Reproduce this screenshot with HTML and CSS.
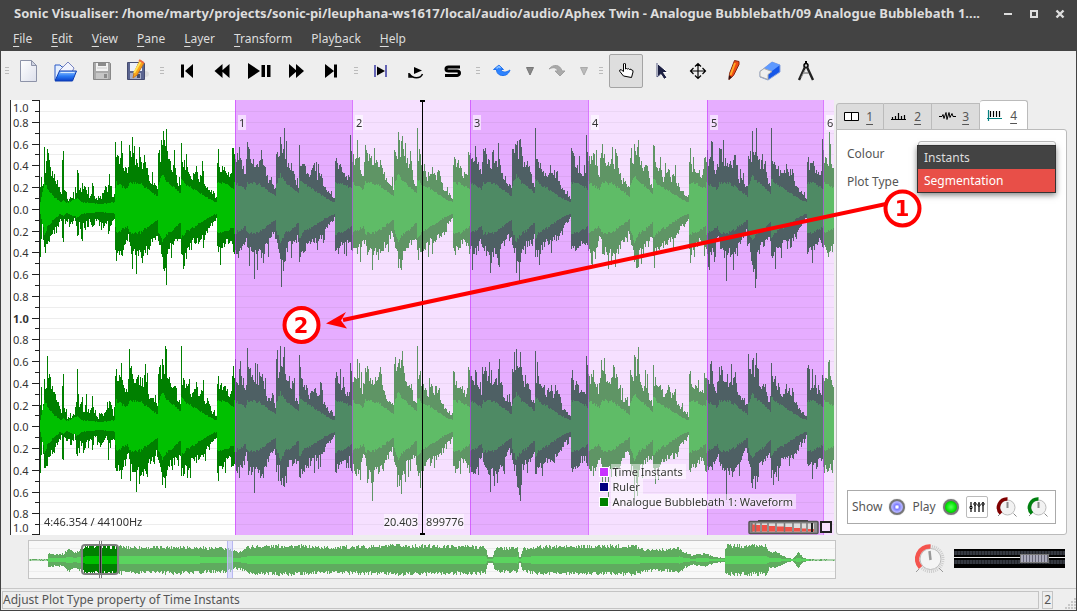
FILE: index.html
```html
<!DOCTYPE html>
<html lang="en">
<head>
<meta charset="utf-8">
<title>Sonic Visualiser</title>
<link rel="stylesheet" href="styles.css">
</head>
<body>
<div class="window">
  <header class="titlebar">
    <h1 class="title">Sonic Visualiser: /home/marty/projects/sonic-pi/leuphana-ws1617/local/audio/audio/Aphex Twin - Analogue Bubblebath/09 Analogue Bubblebath 1....</h1>
    <div class="window-buttons">
      <button class="winbtn" aria-label="Minimise"><svg width="12" height="12"><path d="M2 6h8" stroke="#ddd" stroke-width="2"/></svg></button>
      <button class="winbtn" aria-label="Maximise"><svg width="12" height="12"><path d="M3 3h6v6h-6z" fill="none" stroke="#ddd" stroke-width="2"/></svg></button>
      <button class="winbtn" aria-label="Close"><svg width="12" height="12"><path d="M2.500 2.500l7 7M9.500 2.500l-7 7" stroke="#ddd" stroke-width="2.400"/></svg></button>
    </div>
  </header>
  <nav class="menubar">
    <button><u>F</u>ile</button><button><u>E</u>dit</button><button><u>V</u>iew</button><button><u>P</u>ane</button><button><u>L</u>ayer</button><button><u>T</u>ransform</button><button>Play<u>b</u>ack</button><button><u>H</u>elp</button>
  </nav>

  <div class="toolbar">
    <span class="grip grip-first"></span>
    <div class="group">
      <button class="tool" aria-label="New"><svg width="24" height="24"><defs><linearGradient id="paper" x2="1" y2="1"><stop offset="0" stop-color="#fff"/><stop offset="1" stop-color="#dde0ec"/></linearGradient></defs><path d="M3.500 1.500h11l5 5v16h-16z" fill="url(#paper)" stroke="#8d93a8"/><path d="M14.500 1.500v5h5z" fill="#cfd3e2" stroke="#8d93a8"/></svg></button>
      <button class="tool" aria-label="Open"><svg width="24" height="24"><defs><linearGradient id="folder" x2="0" y2="1"><stop offset="0" stop-color="#9cc6ff"/><stop offset=".5" stop-color="#2c7cf5"/><stop offset="1" stop-color="#0a3fc8"/></linearGradient></defs><path d="M2 6h5l2 2h9v13H2z" fill="#e4efff" stroke="#2a5bc8"/><path d="M6 12L15 3l6 6-3 6z" fill="#f2f4fd" stroke="#7783c0"/><path d="M6.500 12h17l-4 10H2z" fill="url(#folder)" stroke="#0d3db0"/><path d="M7.500 13.500h14" stroke="#d7ebff"/></svg></button>
      <button class="tool" aria-label="Save"><svg width="24" height="24"><path d="M4.500 3.500h16l1 1v16h-17z" fill="#a9a9a9" stroke="#888"/><path d="M7 4h12v8H7z" fill="#f2f2f2"/><path d="M7 14h12v6H7z" fill="#c6c6c6"/><path d="M15 15h3v4h-3zM9 4h8v3H9z" fill="#8b8b8b"/><path d="M8 9h10" stroke="#ccc"/></svg></button>
      <button class="tool" aria-label="Save As"><svg width="24" height="24"><ellipse cx="20" cy="15" rx="4" ry="3" fill="#ddd"/><path d="M2.500 3.500h16l1 1v16h-17z" fill="#5b6590" stroke="#454c70"/><path d="M5 4h12v8H5z" fill="#eef1fa"/><path d="M5 14h11v6H5z" fill="#a7aec8"/><path d="M12 15h3v4h-3z" fill="#444b6b"/><path d="M15 1l4 3-7 12-4 3 1-5z" fill="#fba51a" stroke="#c6761a"/><path d="M16 2L9 14" stroke="#ffe45c" stroke-width="2"/><path d="M14 1l5 3" stroke="#ee6842" stroke-width="2"/></svg></button>
    </div>
    <span class="grip"></span>
    <div class="group">
      <button class="tool" aria-label="Rewind to Start"><svg width="24" height="24"><path d="M6 5.500h3v13H6zM18 5v14l-8-7z"/></svg></button>
      <button class="tool" aria-label="Rewind"><svg width="24" height="24"><path d="M11.500 5v14L3.500 12zM18.500 5v14l-8-7z"/></svg></button>
      <button class="tool" aria-label="Play / Pause"><svg width="24" height="24"><path d="M1 4v16l12-8zM14.500 6h3.500v12h-3.500zM20 6h3.500v12H20z"/></svg></button>
      <button class="tool" aria-label="Fast Forward"><svg width="24" height="24"><path d="M6 5v14l8-7zM13 5v14l8-7z"/></svg></button>
      <button class="tool" aria-label="Fast Forward to End"><svg width="24" height="24"><path d="M6 5v14l9-7zM15 5.500h3v13h-3z"/></svg></button>
    </div>
    <span class="grip"></span>
    <div class="group">
      <button class="tool" aria-label="Constrain Playback to Selection"><svg width="24" height="24"><path d="M6 6v12M17 6v12" stroke="#6565b5" stroke-width="2"/><path d="M8 7.500v9l8-4.500z"/></svg></button>
      <button class="tool" aria-label="Loop Playback"><svg width="24" height="24"><path d="M9 8v7l8-3.500z"/><path d="M4 14v4h4M4.500 15c3 5 11 5 13 0" fill="none" stroke="#000" stroke-width="1.500"/></svg></button>
      <button class="tool" aria-label="Solo Current Pane"><svg width="24" height="24"><path d="M19 8H7.500Q5 8 5 10t2.500 2h8.500q2.500 0 2.500 2t-2.500 2.500H4" fill="none" stroke="#000" stroke-width="3"/></svg></button>
    </div>
    <span class="grip"></span>
    <div class="group">
      <button class="tool" aria-label="Undo"><svg width="24" height="24"><path d="M2.500 10.500L8 6l4.500 4.500H10c1 3 4.500 3.500 9 .500-1.500 5-6 6.500-10 5-2.500-1-3.500-3-3.500-5.500z" fill="#2d83ff" stroke="#2372ec"/><path d="M5.500 9.500L8 7.500l1.500 1.500" fill="none" stroke="#8fc2ff" stroke-width="1.500"/></svg></button>
      <button class="tool narrow" aria-label="Undo history"><svg width="10" height="10"><path d="M1.500 1.500h7L5 9z" fill="#888" stroke="#777"/></svg></button>
      <button class="tool" aria-label="Redo"><svg width="24" height="24"><path d="M4 10c4-5 11-5 13 2h3l-5 5-5-5h3c-2-4-5-4-9-2z" fill="#aaa" stroke="#a0a0a0"/></svg></button>
      <button class="tool narrow" aria-label="Redo history"><svg width="10" height="10"><path d="M1.500 1.500h7L5 9z" fill="#bbb" stroke="#aaa"/></svg></button>
    </div>
    <span class="grip grip-wide"></span>
    <div class="group">
      <button class="tool pressed" aria-label="Navigate"><svg width="24" height="24"><path d="M9.500 17L5.500 12q0-2 2-1l2 1.500V5q1-2 2 0v5q1-1 2 0 1-1 2 .500 2-1 2 .500 2 0 1.500 2l-1.500 5.500z" fill="#fff" stroke="#000"/></svg></button>
      <button class="tool" aria-label="Select"><svg width="24" height="24"><path d="M7.500 4.500v14l3.500-3 3 5 3-2-3.500-5h4.500z" fill="#1d2143" stroke="#fff"/><path d="M7 4v14l3.500-3" fill="none" stroke="#555b80"/></svg></button>
      <button class="tool" aria-label="Edit"><svg width="24" height="24"><path d="M12 4.500v15M4.500 12h15M9 7.500l3-3 3 3M9 16.500l3 3 3-3M7.500 9l-3 3 3 3M16.500 9l3 3-3 3" fill="none" stroke="#000" stroke-width="1.200"/></svg></button>
      <button class="tool" aria-label="Draw"><svg width="24" height="24"><path d="M12.500 1.500l4.500 1v3l-5.500 11-4.500 4 .500-6z" fill="#f04c12" stroke="#822714"/><path d="M13 4L8.500 16" stroke="#ffad28" stroke-width="2"/><path d="M7 16.500l3 1.500-3.500 3z" fill="#311"/></svg></button>
      <button class="tool" aria-label="Erase"><svg width="24" height="24"><path d="M2 12.500L14 3l8 3v7L10 21l-8-3z" fill="#1657e8" stroke="#8ba4dc"/><path d="M2 12.500L14 3l8 3-12 9z" fill="#5f9aff"/><path d="M2 12.500l4-3 8 3-4 3v5l-8-3z" fill="#eee" stroke="#aaa"/></svg></button>
      <button class="tool" aria-label="Measure"><svg width="24" height="24"><path d="M12 2v3" stroke="#000" stroke-width="2"/><circle cx="12" cy="6.500" r="2" fill="#ccc" stroke="#000" stroke-width="1.500"/><path d="M11 8L5 21M13 8l6 13" stroke="#222" stroke-width="2.400"/><path d="M9.500 14h5" stroke="#555"/><path d="M11 11L7 19" stroke="#999"/></svg></button>
    </div>
  </div>

  <main class="main">
    <section class="pane" aria-label="Waveform pane">
      <div class="scale" id="scale"></div>
      <div class="stage">
        <canvas class="fill" id="wave"></canvas>
        <div id="segments"></div>
        <div class="playhead"></div>
        <span class="readout duration">4:46.354 / 44100Hz</span>
        <span class="readout seconds">20.403</span>
        <span class="readout frames">899776</span>
        <ul class="legend">
          <li><i class="swatch instants"></i><span>Time Instants</span></li>
          <li><i class="swatch ruler"></i><span>Ruler</span></li>
          <li><i class="swatch waveform"></i><span>Analogue Bubblebath 1: Waveform</span></li>
        </ul>
        <svg class="zoomwheel" width="84" height="15">
          <rect x="1" y="1.500" width="69" height="12" rx="1" fill="#8e8e8e" stroke="#555" stroke-width="1.500"/>
          <path d="M10 .500h50" stroke="#444"/>
          <path d="M5 3.500h61v8H5z" fill="#ddd"/>
          <path d="M4 4.500h3v7H4zM8 5h4v6.500H8zM14 5h5v6.500h-5zM21 6h6v5.500h-6zM29 6.500h7v5h-7zM37 7h7v4.500h-7zM46 8h6v3.500h-6zM54 8.500h4v3h-4zM60 9h6v2.500h-6z" fill="#ef5148"/>
          <path d="M3.500 3v9M7.500 3v9M13 3v9M20 3v9M28 3v9M36.500 3v9M45 3v9M53 3v9M59 3v9" stroke="#777" stroke-width="1.500"/><path d="M64 3v9" stroke="#222" stroke-width="2"/>
          <rect x="73" y="2" width="10" height="10" fill="#f6e0ff" stroke="#222" stroke-width="2"/>
        </svg>
      </div>
    </section>

    <section class="side">
      <div class="tabs" role="tablist">
        <button class="tab" role="tab"><svg width="16" height="12"><path d="M.500 1.500h14v8H.500zM7.500 1.500v8" fill="#fff" stroke="#000"/></svg><u>1</u></button>
        <button class="tab" role="tab"><svg width="16" height="12"><path d="M0 8.500h15M1.500 8V6M4.500 8V5M7.500 8V2M10.500 8V5M13.500 8V4" stroke="#000" stroke-width="1.200"/></svg><u>2</u></button>
        <button class="tab" role="tab"><svg width="17" height="12"><path d="M0 5.500h3l1-2 1 4 2-6 1 7 2-7 1 5 2-4 1 3h3" fill="none" stroke="#000"/></svg><u>3</u></button>
        <button class="tab active" role="tab" aria-selected="true"><svg width="16" height="12"><path d="M1.500 0v11M0 8.500h15" stroke="#058080" stroke-width="1.200"/><path d="M3.500 1v6M6.500 1v6M9.500 1v6M12.500 1v6" stroke="#000" stroke-width="1.200"/></svg><u>4</u></button>
      </div>
      <div class="panel">
        <div class="props">
          <label for="colour">Colour</label>
          <select id="colour" class="combo"><option></option></select>
          <label for="plot">Plot Type</label>
          <select id="plot" class="combo"><option></option></select>
          <div class="popup" role="listbox" aria-label="Plot Type">
            <button role="option">Instants</button>
            <button role="option" class="chosen" aria-selected="true">Segmentation</button>
          </div>
        </div>
        <div class="playbox">
          <label for="show">Show</label><input class="led blue" type="checkbox" id="show" checked>
          <label for="play">Play</label><input class="led green" type="checkbox" id="play" checked>
          <button class="mixer" aria-label="Playback parameters"><svg width="16" height="12"><path d="M2 1v10M6 1v10M10 1v10M14 1v10" stroke="#000" stroke-width="1.200"/><path d="M1 5.500h2v2H1zM5 2h2v2H5zM9 3h2v2H9zM13 2h2v2h-2z" fill="#fff" stroke="#000"/></svg></button>
          <span class="dial"><svg width="24" height="24"><circle cx="12.500" cy="12.500" r="7.500" fill="#f2f2f2" stroke="#bbb"/><path d="M6 18.500A8.500 8.500 0 0 1 12.500 4" fill="none" stroke="#800000" stroke-width="3.500"/><path d="M12.500 7v6" stroke="#888" stroke-width="2"/><path d="M5 19l-2 2M18.500 18.500l3 3" stroke="#888"/></svg><input type="range" aria-label="Gain"></span>
          <span class="dial"><svg width="24" height="24"><circle cx="12.500" cy="12.500" r="7.500" fill="#f2f2f2" stroke="#bbb"/><path d="M6 18.500A8.500 8.500 0 0 1 12.500 4" fill="none" stroke="#008010" stroke-width="3.500"/><path d="M12.500 7v6" stroke="#888" stroke-width="2"/><path d="M5 19l-2 2M18.500 18.500l3 3" stroke="#888"/></svg><input type="range" aria-label="Pan"></span>
        </div>
      </div>
    </section>

    <section class="overview" aria-label="Overview">
      <canvas class="fill" id="overview"></canvas>
      <div class="viewport"></div>
    </section>
    <div class="transport">
      <span class="dial big"><svg width="32" height="32"><circle cx="16.500" cy="16" r="12.500" fill="none" stroke="#ccc" stroke-width="3" stroke-dasharray="1 1"/><circle cx="16.500" cy="16" r="10.500" fill="#f4f4f4" stroke="#bbb"/><path d="M6.500 24.500A12.500 12.500 0 0 1 16.500 3.500" fill="none" stroke="#f4544e" stroke-width="4.500"/><path d="M15.500 8l1 9" stroke="#999" stroke-width="2.500"/><path d="M5 26l-3 3M25 25l4 4" stroke="#999"/></svg><input type="range" aria-label="Playback speed"></span>
      <input class="fader" type="range" min="0" max="100" value="80" aria-label="Master volume">
    </div>
  </main>

  <footer class="status">
    <span class="message">Adjust Plot Type property of Time Instants</span>
    <span class="cell">2</span>
    <svg class="sizegrip" width="12" height="12"><path d="M10 1h2M7 4h2M10 4h2M4 7h2M7 7h2M10 7h2M1 10h2M4 10h2M7 10h2M10 10h2" stroke="#bbb" stroke-width="1.500"/></svg>
  </footer>

  <svg class="callouts" width="1077" height="611">
    <path d="M886 204L343 320" stroke="#f00" stroke-width="4"/>
    <path d="M326 323.500l20-11.500-5 8.500 6 8z" fill="#f00"/>
    <g fill="#fff" stroke="#f00" stroke-width="4"><circle cx="902.500" cy="208.500" r="17"/><circle cx="301.500" cy="325" r="17"/></g>
    <g class="callout-text"><text x="902" y="216">1</text><text x="301" y="333">2</text></g>
  </svg>
</div>
<script src="app.js"></script>
</body>
</html>
```
FILE: styles.css
```css
* { box-sizing: border-box; }
body {
  margin: 0;
  background: #434343;
  font: 12px/18px "Noto Sans", sans-serif;
  color: #555;
}
button {
  font: inherit;
  color: inherit;
  background: none;
  border: 0;
  padding: 0;
  margin: 0;
}
svg { display: block; }
u { text-underline-offset: 3px; }

.window {
  position: relative;
  display: flex;
  flex-direction: column;
  min-height: 100vh;
  border: 1px solid #434343;
  border-top: 0;
  background: #eee;
  overflow: hidden;
}
.titlebar {
  display: flex;
  align-items: center;
  height: 27px;
  padding: 0 10px 0 13px;
  background: #434343;
  color: #ddd;
}
.title {
  flex: 1;
  min-width: 0;
  margin: 0;
  font-size: 13px;
  line-height: 16px;
  padding-bottom: 2px;
  font-weight: bold;
  white-space: nowrap;
  overflow: hidden;
}
.window-buttons { display: flex; gap: 14px; }
.menubar {
  display: flex;
  gap: 1px;
  height: 24px;
  padding-left: 3px;
  background: #434343;
  color: #ddd;
}
.menubar button { padding: 0 9px; }

.toolbar {
  display: flex;
  height: 44px;
  padding-top: 3px;
}
.group { display: flex; gap: 2px; }
.tool {
  display: flex;
  align-items: center;
  justify-content: center;
  width: 34px;
  height: 34px;
  border: 1px solid transparent;
  border-radius: 2px;
}
.tool.narrow { width: 16px; }
.tool.pressed { background: #dedede; border-color: #a4a4a4; }
.grip { width: 16px; height: 34px; display: flex; align-items: center; justify-content: center; }
.grip-first { width: 11px; }
.grip-wide { width: 17px; }
.grip::before {
  content: "";
  width: 4px;
  height: 8px;
  background: repeating-linear-gradient(#bbb 0 1px, transparent 1px 3px);
}

.main {
  flex: 1;
  display: grid;
  grid-template-columns: 1fr 231px;
  grid-template-rows: 1fr 40px;
  row-gap: 5px;
  padding: 5px 9px 8px;
}
.pane {
  display: flex;
  margin-right: 2px;
  border-left: 1px solid #333;
  background: #fff;
  font-size: 11px;
  line-height: 15px;
  color: #333;
}
.scale {
  position: relative;
  width: 29px;
  border-right: 1px solid #222;
  overflow: hidden;
}
.scale span { position: absolute; left: 2px; transform: translateY(-50%); }
.scale .joint { font-weight: bold; }
.scale i { position: absolute; right: 0; width: 4px; height: 1px; background: #222; }
.scale .major { width: 7px; }
.stage { position: relative; flex: 1; min-width: 0; overflow: hidden; }
.fill { position: absolute; inset: 0; width: 100%; height: 100%; }
.segment-label {
  position: absolute;
  top: 15px;
  padding: 0 1px;
  background: rgba(255, 255, 255, .6);
}
.playhead {
  position: absolute;
  left: calc(48% + 1px);
  top: 0;
  bottom: 0;
  width: 1px;
  background: #000;
}
.playhead::before, .playhead::after {
  content: "";
  position: absolute;
  left: -2px;
  width: 5px;
  height: 2px;
  background: #000;
}
.playhead::before { top: 0; }
.playhead::after { bottom: 0; }
.readout { position: absolute; bottom: 6px; text-shadow: 0 0 1px #fff, 0 0 2px #fff; }
.duration { left: 4px; }
.seconds { right: calc(52% + 3px); background: rgba(255, 255, 255, .5); }
.frames { left: calc(48% + 5px); background: rgba(255, 255, 255, .5); }
.legend {
  position: absolute;
  right: 38px;
  bottom: 26px;
  margin: 0;
  padding: 0;
  list-style: none;
}
.legend li { display: flex; align-items: center; gap: 2px; }
.legend span {
  padding: 0 3px 0 1px;
  background: rgba(255, 255, 255, .5);
  text-shadow: 0 0 1px #fff, 0 0 2px #fff;
}
.swatch { width: 10px; height: 10px; border: 1px solid #fff; }
.instants { background: #c832ff; }
.ruler { background: #000080; }
.waveform { background: #008000; }
.zoomwheel { position: absolute; right: 2px; bottom: 0; }

.side { display: flex; flex-direction: column; min-width: 0; }
.tabs { display: flex; align-items: flex-end; height: 30px; margin-bottom: -1px; }
.tab {
  display: flex;
  align-items: center;
  gap: 6px;
  width: 48px;
  height: 27px;
  padding: 0 10px 0 7px;
  border: 1px solid #bbb;
  border-left-width: 0;
  background: #dcdcdc;
}
.tab:first-child { border-left-width: 1px; border-radius: 3px 0 0 0; }
.tab u { margin-left: auto; }
.tab.active {
  height: 30px;
  border-bottom: 0;
  background: #fff;
  border-radius: 3px 3px 0 0;
}
.panel {
  flex: 1;
  display: flex;
  flex-direction: column;
  justify-content: space-between;
  padding: 11px 10px 10px;
  border: 1px solid #bbb;
  border-radius: 0 3px 3px 3px;
  background: #fff;
}
.props {
  position: relative;
  display: grid;
  grid-template-columns: 71px 1fr;
  row-gap: 4px;
  align-items: center;
}
.props label { padding-top: 2px; }
.combo {
  height: 24px;
  min-width: 0;
  border: 1px solid #bbb;
  border-radius: 3px;
  background: #fff;
  appearance: none;
}
.popup {
  position: absolute;
  left: 70px;
  right: 0;
  top: 4px;
  display: flex;
  flex-direction: column;
  border: 1px solid #333;
  background: #434343;
  color: #ddd;
  box-shadow: 0 2px 6px rgba(0, 0, 0, .5);
}
.popup button { height: 23px; padding: 1px 6px 0; text-align: left; }
.popup .chosen { background: #e84f48; color: #fff; }
.playbox {
  display: flex;
  align-items: center;
  gap: 7px;
  height: 34px;
  padding: 0 4px;
  border: 1px solid #aaa;
}
.led {
  appearance: none;
  width: 16px;
  height: 16px;
  margin: 0;
  border: 2px solid #777;
  border-radius: 50%;
  box-shadow: 0 0 1px #888;
}
.blue { background: radial-gradient(#fff 10%, #7d7dff 30%, #b5b5ff 60%, #6d6dd8); }
.green { background: radial-gradient(#4cff4c 10%, #00e000 60%, #009000); }
.mixer {
  display: flex;
  align-items: center;
  justify-content: center;
  width: 22px;
  height: 22px;
  border: 1px solid #bbb;
  border-radius: 2px;
}
.dial { position: relative; }
.dial input { position: absolute; inset: 0; width: 100%; height: 100%; margin: 0; opacity: 0; }

.overview {
  position: relative;
  margin: 0 0 1px 18px;
  border: 1px solid #c4c4c4;
  background: #f8f8f8;
}
.viewport {
  position: absolute;
  left: 52px;
  top: 3px;
  bottom: 3px;
  width: 38px;
  border: 2px solid #808080;
  border-radius: 4px;
}
.transport { display: flex; align-items: center; justify-content: flex-end; gap: 8px; padding: 0 2px 3px 0; }
.fader {
  appearance: none;
  width: 111px;
  height: 19px;
  margin: 0;
  background:
    linear-gradient(transparent 8px, #eee 8px 9px, transparent 9px),
    repeating-linear-gradient(90deg, rgba(0, 0, 0, .35) 0 1px, transparent 1px 3px),
    linear-gradient(#000 0 2px, #353941 2px 6px, #000 6px 11px, #353941 11px 15px, #000 15px);
}
.fader::-webkit-slider-thumb {
  appearance: none;
  width: 29px;
  height: 9px;
  border: 1px solid #777;
  background: repeating-linear-gradient(90deg, #aab 0 2px, #667 2px 3px);
}

.status {
  display: flex;
  align-items: center;
  gap: 3px;
  height: 22px;
  padding: 0 0 0 1px;
  border-top: 1px solid #c8c8c8;
}
.message, .cell { border: 1px solid #c4c4c4; padding: 0 1px; line-height: 16px; }
.message { flex: 1; padding-left: 0; }
.sizegrip { margin-left: 8px; align-self: flex-end; }

.callouts { position: absolute; left: -1px; top: 0; pointer-events: none; }
.callout-text {
  font: bold 21px "DejaVu Sans", sans-serif;
  text-anchor: middle;
  fill: #f00;
}
```
FILE: app.js
```javascript
// Envelope breakpoints: [x, amplitude, x, amplitude, ...] in pixels.
const BAR = 118;
const bar = {
  up: [0,54,4,50,5,67,6,54,9,42,11,37,13,65,18,52,22,48,27,48,28,60,30,46,33,31,38,27,41,22,42,62,45,54,46,77,48,60,50,80,51,58,55,42,59,46,61,30,64,24,65,74,66,50,71,45,75,33,80,44,83,32,87,42,88,29,92,20,97,14,100,11,101,52,102,60,103,45,107,44,113,34,115,38,116,62,118,58],
  down: [0,46,5,50,8,42,12,31,14,46,19,50,20,75,21,49,28,50,31,44,35,36,40,25,42,38,45,48,46,60,48,62,49,70,51,50,55,40,60,37,64,32,65,52,70,46,76,38,83,34,88,32,92,22,97,16,100,11,101,48,106,44,111,37,115,36,117,46,118,54],
  inner: [0,26,11,19,13,26,24,25,32,19,41,12,42,24,46,34,48,30,51,26,57,22,64,15,65,30,70,24,80,18,90,11,97,7,100,6,101,26,108,25,118,19]
};
const intro = {
  up: [0,26,1,32,2,18,3,25,4,52,5,34,7,60,9,50,11,38,14,35,18,25,21,16,22,49,23,52,24,20,27,10,34,12,36,22,37,46,38,30,40,20,46,20,50,13,52,30,53,18,57,9,62,13,68,24,72,17,76,10],
  down: [0,38,1,35,2,15,4,44,5,46,7,40,10,32,14,24,18,16,21,11,22,35,23,36,24,12,30,17,34,10,37,33,38,22,45,22,50,12,53,25,54,14,61,18,67,14,68,27,72,12,76,10],
  inner: [0,6,3,20,4,26,8,18,14,11,20,6,23,8,26,5,37,10,42,6,60,4,76,6]
};
const overviewEnvelope = [0,0.5,18,0.5,19,7,34,6,39,12,45,8,52,11,57,14,88,14,120,13,150,14,170,13,200,12,203,9,211,9,219,14,260,15,300,13,370,15,450,14,457,13,459,3,464,3,466,12,489,13,491,0.5,494,12,500,12,505,14,550,14,606,15,616,11,640,11,651,13,656,8,663,5,677,7,686,3,696,2,697,15,738,15,741,8,749,8,757,3,764,1,770,8,775,2,783,0.5,807,0.5];
const boundaries = [195, 312, 430, 548, 667, 783];
const AREA_WIDTH = 794;

function sample(points, x) {
  for (let i = 2; i < points.length; i += 2) {
    if (x < points[i]) {
      const t = (x - points[i - 2]) / (points[i] - points[i - 2]);
      return points[i - 1] + t * (points[i + 1] - points[i - 1]);
    }
  }
  return points[points.length - 1];
}

function noise(n) {
  const v = Math.sin(n * 127.1 + 311.7) * 43758.5453;
  return v - Math.floor(v);
}

function prepare(canvas) {
  canvas.width = canvas.clientWidth;
  canvas.height = canvas.clientHeight;
  return canvas.getContext("2d");
}

function drawWave() {
  const canvas = document.getElementById("wave");
  const g = prepare(canvas);
  const w = canvas.width, h = canvas.height;
  const unit = w / AREA_WIDTH;
  const themes = [
    { back: "#fff", grid: "#ededed", outer: "#008000", inner: "#00c000" },
    { back: "#e6adff", grid: "#dba5f2", outer: "#4e6064", inner: "#4e8a64" },
    { back: "#f6e0ff", grid: "#ebd6f4", outer: "#5f9565", inner: "#5fbc67" }
  ];
  for (let px = 0; px < w; px++) {
    const x = px / unit;
    const passed = boundaries.filter(b => x >= b).length;
    const theme = themes[passed === 0 ? 0 : 2 - passed % 2];
    g.fillStyle = theme.back;
    g.fillRect(px, 0, 1, h);
    g.fillStyle = theme.grid;
    for (let k = 1; k < 40; k++) {
      g.fillRect(px, Math.round(h * k / 40), 1, 1);
    }
    const quiet = x < 75;
    const source = quiet ? intro : bar;
    const pos = quiet ? x : (x - 76 + BAR) % BAR;
    for (let ch = 0; ch < 2; ch++) {
      const mid = Math.floor(h * (1 + 2 * ch) / 4);
      const scale = h / 435;
      const outer = (points, seed) => {
        const r = noise(px + seed + ch * 900);
        const spike = noise(px * 3 + seed + ch * 50) > 0.86 ? 1.28 : 1;
        const vary = quiet && x > 24 ? 0.65 + 0.6 * r : 0.8 + 0.22 * r;
        return Math.round(Math.min(sample(points, pos) * vary * spike, 80) * scale);
      };
      const up = outer(source.up, 1);
      const down = outer(source.down, 2000);
      const inner = sample(source.inner, pos) * scale;
      const iu = Math.round(inner * (0.92 + 0.12 * noise(px + 7)));
      const id = Math.round(inner * (0.92 + 0.12 * noise(px + 77)));
      g.fillStyle = theme.outer;
      g.fillRect(px, mid - up, 1, up + down);
      g.fillStyle = theme.inner;
      g.fillRect(px, mid - iu, 1, iu + id);
    }
  }
  g.fillStyle = "rgba(200, 50, 255, .6)";
  boundaries.forEach(b => g.fillRect(Math.round(b * unit), 0, 1, h));
}

function drawOverview() {
  const canvas = document.getElementById("overview");
  const g = prepare(canvas);
  const w = canvas.width, h = canvas.height, mid = Math.round(h / 2);
  g.fillStyle = "#ededed";
  g.fillRect(0, 7, w, 1);
  g.fillRect(0, h - 7, w, 1);
  for (let x = 0; x < w; x++) {
    const amp = sample(overviewEnvelope, x * 807 / w);
    const view = x >= 54 && x < 89;
    const up = Math.max(0.5, Math.round(amp * (0.8 + 0.28 * noise(x + 3))));
    const down = Math.max(0.5, Math.round(amp * (0.8 + 0.28 * noise(x + 500))));
    g.fillStyle = view ? "#008000" : "#5fab5f";
    g.fillRect(x, mid - up, 1, up + down);
    if (amp > 1) {
      const inner = Math.max(1, Math.round(amp * 0.27));
      g.fillStyle = view ? "#00c000" : "#5bd45f";
      g.fillRect(x, mid - inner, 1, inner * 2);
    }
  }
  g.fillStyle = "rgba(200, 200, 255, .55)";
  g.fillRect(198, 0, 6, h);
  g.fillStyle = "#b8b8f0";
  g.fillRect(198, 0, 1, h);
  g.fillRect(203, 0, 1, h);
  g.fillStyle = "#fff";
  g.fillRect(70, 0, 3, h);
  g.fillStyle = "#777";
  g.fillRect(70, 0, 1, h);
  g.fillRect(72, 0, 1, h);
  g.fillStyle = "#222";
  g.fillRect(71, 5, 1, h - 10);
}

function buildScale() {
  const values = ["1.0", "0.8", "0.6", "0.4", "0.2", "0.0", "0.2", "0.4", "0.6", "0.8", "1.0",
    "0.8", "0.6", "0.4", "0.2", "0.0", "0.2", "0.4", "0.6", "0.8", "1.0"];
  let html = "";
  for (let k = 0; k <= 40; k++) {
    const top = Math.min(k * 2.5, 99.7);
    html += `<i class="${k % 2 ? "" : "major"}" style="top:${top}%"></i>`;
  }
  values.forEach((v, k) => {
    const top = Math.max(1.6, Math.min(k * 5, 98.2));
    html += `<span class="${k === 10 ? "joint" : ""}" style="top:${top}%">${v}</span>`;
  });
  document.getElementById("scale").innerHTML = html;
  document.getElementById("segments").innerHTML = boundaries.map((b, i) =>
    `<span class="segment-label" style="left:${(b + 3) / AREA_WIDTH * 100}%">${i + 1}</span>`).join("");
}

function draw() {
  drawWave();
  drawOverview();
}

buildScale();
draw();
window.addEventListener("resize", draw);
```
